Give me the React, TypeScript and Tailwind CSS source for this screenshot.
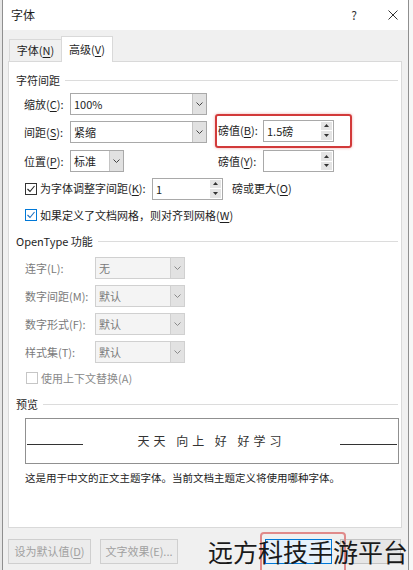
import React from "react";

function Chevron({ dim }: { dim?: boolean }) {
  return (
    <svg width="7" height="4" viewBox="0 0 7 4">
      <polyline points="0.5,0.5 3.5,3.5 6.5,0.5" fill="none" stroke={dim ? "#8a8a8a" : "#444"} strokeWidth="1" />
    </svg>
  );
}

function Mn({ pre, k, post = "" }: { pre: string; k: string; post?: string }) {
  return (
    <>
      {pre}(<span className="underline underline-offset-2">{k}</span>){post}
    </>
  );
}

function Combo({ w, value, disabled }: { w: string; value: string; disabled?: boolean }) {
  return (
    <div className={`flex h-[22px] ${w} border ${disabled ? "border-[#d0d0d0] bg-[#f4f4f4] text-[#7a7a7a]" : "border-[#a9a9a9] bg-white text-[#1e1e1e]"}`}>
      <div className="flex-1 pl-[3px] leading-[20px]">{value}</div>
      <div className={`w-[14px] flex items-center justify-center border-l ${disabled ? "bg-[#e2e2e2] border-[#d0d0d0]" : "bg-[#e1e1e1] border-[#c4c4c4]"}`}>
        <Chevron dim={disabled} />
      </div>
    </div>
  );
}

function Spin({ w, value }: { w: string; value: string }) {
  return (
    <div className={`flex h-[22px] ${w} border border-[#a9a9a9] bg-white`}>
      <div className="flex-1 pl-[3px] leading-[20px] text-[#1e1e1e]">{value}</div>
      <div className="w-[13px] flex flex-col p-[1px] gap-[1px]">
        <div className="flex-1 bg-[#e4e4e4] flex items-center justify-center">
          <svg width="5" height="3" viewBox="0 0 5 3"><polygon points="2.5,0 5,3 0,3" fill="#333" /></svg>
        </div>
        <div className="flex-1 bg-[#e4e4e4] flex items-center justify-center">
          <svg width="5" height="3" viewBox="0 0 5 3"><polygon points="0,0 5,0 2.5,3" fill="#333" /></svg>
        </div>
      </div>
    </div>
  );
}

function Check({ checked, tone }: { checked?: boolean; tone: "dark" | "blue" | "off" }) {
  const border = tone === "blue" ? "border-[#0078d7]" : tone === "off" ? "border-[#c6c6c6]" : "border-[#333333]";
  const stroke = tone === "blue" ? "#1a6fc0" : "#222";
  return (
    <div className={`w-[12px] h-[12px] border ${border} bg-white flex items-center justify-center`}>
      {checked && (
        <svg width="10" height="10" viewBox="0 0 10 10">
          <polyline points="1.5,5 4,7.5 8.5,2" fill="none" stroke={stroke} strokeWidth="1.1" />
        </svg>
      )}
    </div>
  );
}

function GroupHeader({ title }: { title: string }) {
  return (
    <div className="flex items-center h-[16px] pl-[7px] pr-[3px] gap-[5px]">
      <span className="text-[#1e1e1e]">{title}</span>
      <div className="flex-1 h-px bg-[#dcdcdc]" />
    </div>
  );
}

export default function App() {
  return (
    <div className="relative w-[413px] h-[570px] overflow-hidden bg-white text-[11px] font-['Noto_Sans_CJK_SC',sans-serif] text-[#1e1e1e]">
      <div className="flex h-full">
        <div className="w-[3px] border-r border-[#8f8f8f] bg-[#e6e6e6]" />

        <div className="flex-1 flex flex-col bg-[#f0f0f0]">
          {/* title bar */}
          <div className="h-[30px] bg-white flex items-center pl-[8px]">
            <span className="text-[12px]">字体</span>
            <span className="ml-auto text-[12px] text-[#333]">?</span>
            <svg className="ml-[31px] mr-[10px]" width="10" height="10" viewBox="0 0 10 10">
              <path d="M0.5 0.5 L9.5 9.5 M9.5 0.5 L0.5 9.5" stroke="#333" strokeWidth="1" />
            </svg>
          </div>

          {/* tabs */}
          <div className="h-[31px] flex items-end pl-[6px] relative z-10">
            <div className="w-[52px] h-[22px] border-t border-l border-[#d9d9d9] flex items-center justify-center text-[#1e1e1e]">
              <Mn pre="字体" k="N" />
            </div>
            <div className="w-[52px] h-[26px] -mb-px bg-white border-t border-l border-r border-[#d9d9d9] flex items-center justify-center">
              <Mn pre="高级" k="V" />
            </div>
          </div>

          {/* panel */}
          <div className="ml-[5px] mr-[6px] h-[467px] border border-[#d9d9d9] bg-white pt-[10px]">
            <GroupHeader title="字符间距" />

            <div className="flex items-center h-[22px] mt-[5px] pl-[15px]">
              <div className="w-[46px]"><Mn pre="缩放" k="C" post=":" /></div>
              <Combo w="w-[137px]" value="100%" />
            </div>

            <div className="flex items-center h-[22px] mt-[6px] pl-[15px]">
              <div className="w-[46px]"><Mn pre="间距" k="S" post=":" /></div>
              <Combo w="w-[137px]" value="紧缩" />
              <div className="ml-[8px] w-[137px] h-[34px] -mt-[3px] border-2 border-[#d23a3a] rounded-[3px] shadow-[0_0_3px_rgba(220,60,60,0.45)] flex items-center">
                <div className="w-[46px] pl-[1px]"><Mn pre="磅值" k="B" post=":" /></div>
                <Spin w="w-[71px]" value="1.5磅" />
              </div>
            </div>

            <div className="flex items-center h-[22px] mt-[7px] pl-[15px]">
              <div className="w-[46px]"><Mn pre="位置" k="P" post=":" /></div>
              <div className="w-[137px]"><Combo w="w-[54px]" value="标准" /></div>
              <div className="ml-[8px] w-[137px] pl-[2px] flex items-center">
                <div className="w-[46px] pl-[1px]"><Mn pre="磅值" k="Y" post=":" /></div>
                <Spin w="w-[71px]" value="" />
              </div>
            </div>

            <div className="flex items-center h-[21px] mt-[6px] pl-[16px]">
              <Check checked tone="dark" />
              <div className="ml-[3px] w-[112px]"><Mn pre="为字体调整字间距" k="K" post=":" /></div>
              <Spin w="w-[71px]" value="1" />
              <div className="ml-[9px]"><Mn pre="磅或更大" k="O" /></div>
            </div>

            <div className="flex items-center h-[16px] mt-[8px] pl-[16px]">
              <Check checked tone="blue" />
              <div className="ml-[3px]"><Mn pre="如果定义了文档网格，则对齐到网格" k="W" /></div>
            </div>

            <div className="mt-[10px]"><GroupHeader title="OpenType 功能" /></div>

            {[
              ["连字(L):", "无"],
              ["数字间距(M):", "默认"],
              ["数字形式(F):", "默认"],
              ["样式集(T):", "默认"],
            ].map(([label, value], i) => (
              <div key={label} className={`flex items-center h-[22px] pl-[16px] ${i === 0 ? "mt-[8px]" : "mt-[6px]"}`}>
                <div className="w-[70px] text-[#7a7a7a]">{label}</div>
                <Combo w="w-[90px]" value={value} disabled />
              </div>
            ))}

            <div className="flex items-center h-[16px] mt-[7px] pl-[17px]">
              <Check tone="off" />
              <div className="ml-[3px] text-[#8a8a8a]">使用上下文替换(A)</div>
            </div>

            <div className="mt-[10px]"><GroupHeader title="预览" /></div>

            <div className="mt-[6px] ml-[16px] w-[374px] h-[46px] border border-[#909090] flex items-center">
              <div className="ml-[1px] w-[56px] h-px bg-[#333] mt-[6px]" />
              <div className="flex-1 text-center text-[12px] tracking-[4px] text-[#333] whitespace-pre">天天 向上 好 好学习</div>
              <div className="mr-[1px] w-[57px] h-px bg-[#333] mt-[6px]" />
            </div>

            <div className="mt-[7px] pl-[16px] h-[14px] leading-[14px] text-[10.5px] text-[#222]">
              这是用于中文的正文主题字体。当前文档主题定义将使用哪种字体。
            </div>
          </div>

          {/* footer */}
          <div className="flex items-start pt-[11px] pl-[5px]">
            <div className="w-[83px] h-[25px] border border-[#cfcfcf] bg-[#ececec] text-[#a0a0a0] flex items-center justify-center">
              设为默认值(<span className="underline underline-offset-2">D</span>)
            </div>
            <div className="ml-[9px] w-[78px] h-[25px] border border-[#cfcfcf] bg-[#ececec] text-[#a0a0a0] flex items-center justify-center">
              文字效果(E)...
            </div>
            <div className="ml-[87px] w-[67px] h-[25px] border border-[#0078d7] bg-[#e5f1fb]" />
            <div className="ml-[8px] w-[61px] h-[25px] border border-[#c4c4c4] bg-[#e6e6e6]" />
          </div>
        </div>

        <div className="w-[5px] border-l border-[#8f8f8f] bg-[#f7f7f7]" />
      </div>

      {/* watermark overlay */}
      <div className="absolute left-[260px] top-[532px] w-[86px] h-[44px] border-2 border-[#e08a8a] rounded-[4px]" />
      <div className="absolute left-[208px] top-[535px] text-[25px] leading-[32px] text-[#1a1a1a] whitespace-nowrap">
        远方科技手游平台
      </div>
    </div>
  );
}
